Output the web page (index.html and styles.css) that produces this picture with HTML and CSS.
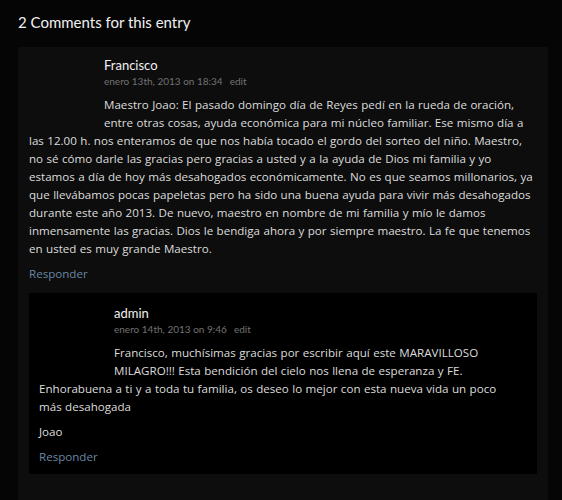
FILE: index.html
```html
<!DOCTYPE html>
<html lang="es">
<head>
<meta charset="utf-8">
<title>Comments</title>
<link rel="stylesheet" href="styles.css">
</head>
<body>
<section class="comments">
  <h3 class="comments-title">2 Comments for this entry</h3>
  <div class="comment">
    <div class="avatar"></div>
    <div class="author">Francisco</div>
    <div class="meta">enero 13th, 2013 on 18:34<a class="edit" href="#">edit</a></div>
    <p>Maestro Joao: El pasado domingo día de Reyes pedí en la rueda de oración,<br>
    entre otras cosas, ayuda económica para mi núcleo familiar. Ese mismo día a<br>
    las 12.00 h. nos enteramos de que nos había tocado el gordo del sorteo del niño. Maestro,<br>
    no sé cómo darle las gracias pero gracias a usted y a la ayuda de Dios mi familia y yo<br>
    estamos a día de hoy más desahogados económicamente. No es que seamos millonarios, ya<br>
    que llevábamos pocas papeletas pero ha sido una buena ayuda para vivir más desahogados<br>
    durante este año 2013. De nuevo, maestro en nombre de mi familia y mío le damos<br>
    inmensamente las gracias. Dios le bendiga ahora y por siempre maestro. La fe que tenemos<br>
    en usted es muy grande Maestro.</p>
    <a class="reply" href="#">Responder</a>
    <div class="comment child">
      <div class="avatar"></div>
      <div class="author">admin</div>
      <div class="meta">enero 14th, 2013 on 9:46<a class="edit" href="#">edit</a></div>
      <p>Francisco, muchísimas gracias por escribir aquí este MARAVILLOSO<br>
      MILAGRO!!! Esta bendición del cielo nos llena de esperanza y FE.<br>
      Enhorabuena a ti y a toda tu familia, os deseo lo mejor con esta nueva vida un poco<br>
      más desahogada</p>
      <p>Joao</p>
      <a class="reply" href="#">Responder</a>
    </div>
  </div>
</section>
</body>
</html>
```
FILE: styles.css
```css
html, body {
  margin: 0;
  padding: 0;
  background: #050505;
}
body {
  font-family: "Lato", "Liberation Sans", sans-serif;
  color: #dcdcdc;
}
.comments {
  padding: 0 14px 0 18px;
}
.comments-title {
  margin: 12px 0 15px;
  font-size: 15px;
  line-height: 20px;
  font-weight: normal;
  color: #f0f0f0;
}
.comment {
  background: #0d0d0d;
  padding: 10px 11px 10px;
  font-family: "Open Sans", "Lato", sans-serif;
  font-size: 11.6px;
  word-spacing: 0.4px;
  line-height: 18px;
}
.comment::after {
  content: "";
  display: block;
  clear: both;
}
.comment.child {
  background: #000;
  padding: 12px 10px 8px;
  margin-bottom: 20px;
}
.avatar {
  float: left;
  width: 64px;
  height: 64px;
  margin-right: 11px;
}
.author {
  font-family: "Lato", sans-serif;
  font-size: 13px;
  line-height: 17px;
  word-spacing: 0;
  color: #f0f0f0;
}
.meta {
  font-family: "Lato", sans-serif;
  font-size: 10px;
  line-height: 14px;
  word-spacing: 0;
  color: #727272;
  margin-bottom: 8px;
}
.meta .edit {
  color: #727272;
  text-decoration: none;
  margin-left: 7px;
}
.comment p {
  margin: 0 0 7px;
}
.reply {
  display: block;
  color: #6886a4;
  text-decoration: none;
  margin-bottom: 10px;
}
.child .reply {
  margin-bottom: 0;
}
```
